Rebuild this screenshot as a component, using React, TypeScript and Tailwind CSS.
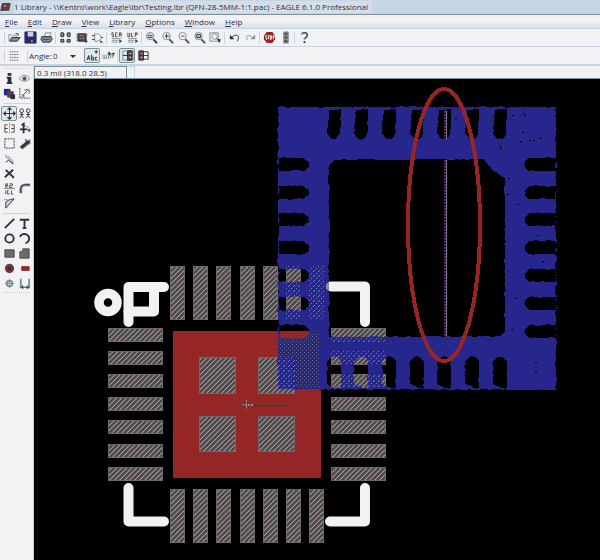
import React from "react";

const INK = "#2c3038";
const MAROON = "#5a4444";
const TEAL = "#7a9296";
const RED = "#962626";
const BLUE = "#26268c";

/* ---------- icons, drawn on a 14 x 14 grid ---------- */

const icons: Record<string, React.ReactNode> = {
  open: (
    <>
      <path d="M1 11V4h3l1 1h4v2" stroke={TEAL} />
      <path d="M2 11l2-4h9l-3 4z" fill={TEAL} stroke={INK} />
      <path d="M8 3h3v2" stroke={INK} />
    </>
  ),
  save: (
    <>
      <path d="M1 1h12v12H1z" fill={BLUE} stroke={INK} />
      <path d="M4 1h6v5H4z" fill="#c6d4e4" />
      <path d="M4 9h6v4H4z" fill={INK} />
      <path d="M8 10h1v2H8z" fill="#f2f2f4" />
    </>
  ),
  print: (
    <>
      <path d="M5 6l1-4h6l-2 4" fill="#f2f2f4" stroke={TEAL} />
      <path d="M2 6h10l1 3-2 3H3L1 9z" fill={TEAL} stroke={INK} />
      <path d="M3 9h7" stroke={MAROON} />
    </>
  ),
  device: (
    <>
      <path d="M2 2h3v4H2zM9 2h3v4H9zM2 9h3v3H2zM9 9h3v3H9z" fill={TEAL} stroke={INK} />
      <path d="M5 4h1M8 4h1M5 11h1M8 11h1" stroke={INK} />
    </>
  ),
  package: (
    <>
      <path d="M3 3h9v8H3z" fill={MAROON} stroke={INK} />
      <path d="M1 4h2M1 7h2M1 10h2M12 4h2M12 7h1" stroke={TEAL} />
      <path d="M5 5h5M5 8h5" stroke={TEAL} />
      <path d="M11 10v3l3-2z" fill={INK} />
    </>
  ),
  symbol: (
    <>
      <path d="M4 3h3q4 1 4 4t-4 4H4z" fill="#f2f2f4" stroke={TEAL} />
      <path d="M1 5h3M1 9h3M11 7h2" stroke={INK} />
      <path d="M10 10v3l3-1z" fill={INK} />
    </>
  ),
  script: (
    <>
      <path d="M4 2H2v2h2v2H2M8 2H6v4h2M10 6V2h2v2h-2M12 4v2" stroke={MAROON} />
      <path d="M2 8h10M2 10h7M2 12h6" stroke={TEAL} />
      <path d="M10 9v4l3-2z" fill={INK} />
    </>
  ),
  ulp: (
    <>
      <path d="M2 2v4h2V2M6 2v4h2M10 6V2h2v2h-2" stroke={MAROON} />
      <path d="M2 8h10M2 10h7M2 12h6" stroke={TEAL} />
      <path d="M10 9v4l3-2z" fill={INK} />
    </>
  ),
  zoomFit: (
    <>
      <circle cx="5.5" cy="5.5" r="4" fill="#c6d4e4" stroke={TEAL} />
      <path d="M3 5h5M3 7h5" stroke={MAROON} />
      <path d="M9 9l4 4" stroke={INK} strokeWidth="2" />
    </>
  ),
  zoomIn: (
    <>
      <circle cx="6" cy="5.5" r="4" fill="#f2f2f4" stroke={TEAL} />
      <path d="M6 3v5M4 5.5h5" stroke={INK} />
      <path d="M9 9l4 4" stroke={MAROON} strokeWidth="2" />
    </>
  ),
  zoomOut: (
    <>
      <circle cx="6" cy="5.5" r="4" fill="#f2f2f4" stroke={TEAL} />
      <path d="M4 5.5h4" stroke={MAROON} />
      <path d="M9 9l4 4" stroke={MAROON} strokeWidth="2" />
    </>
  ),
  zoomRedraw: (
    <>
      <circle cx="6" cy="5.5" r="4" fill="#c6d4e4" stroke={TEAL} />
      <path d="M4 4h4v3H4z" stroke={INK} />
      <path d="M9 9l4 4" stroke={MAROON} strokeWidth="2" />
    </>
  ),
  zoomSelect: (
    <>
      <path d="M1 2h9v9H1z" stroke={TEAL} />
      <circle cx="6" cy="6" r="3" fill="#f2f2f4" stroke={TEAL} />
      <path d="M8 8l2 2" stroke={INK} />
      <path d="M9 9h4l-2 4z" fill={INK} />
    </>
  ),
  undo: (
    <>
      <path d="M4 7q5-5 7-1 1 2-1 5" stroke={INK} />
      <path d="M2 4v5h5z" fill={INK} />
    </>
  ),
  redo: (
    <>
      <path d="M9 7Q4 3 3 6q-1 2 1 4" stroke={TEAL} />
      <path d="M12 4v5H7z" fill={TEAL} />
    </>
  ),
  stop: (
    <>
      <path d="M4 1h6l3 4v4l-3 4H4L1 9V5z" fill={RED} />
      <path d="M4 5H3v2h1v2H3M5 5h2M6 5v4M8 5h1v4H8zM11 9V5h1v2h-1" stroke="#f2f2f4" />
    </>
  ),
  go: (
    <>
      <path d="M5 1h5v12H5z" fill={TEAL} stroke={TEAL} />
      <path d="M6 3h3M6 7h3M6 11h3" stroke={MAROON} strokeWidth="2" />
    </>
  ),
  help: (
    <>
      <path d="M4 4q0-2 3-2t3 2-3 4v1" stroke={TEAL} strokeWidth="2" />
      <path d="M5 2q5-1 5 2t-3 5" stroke={INK} />
      <path d="M6 11h2v2H6z" fill={INK} />
    </>
  ),
  grid: (
    <path d="M2 3h10M2 6h10M2 9h10M2 12h10" stroke={INK} strokeDasharray="1 1" />
  ),
  abc: (
    <>
      <path d="M9 3h4M11 1v4" stroke={INK} />
      <path d="M1 12l2-5 1 5M2 10h2M6 6v6h2V9H6M12 9h-2v3h2" stroke={INK} />
    </>
  ),
  mirror: (
    <>
      <path d="M1 6v4h2V6M3 10h2V6M7 3v8M9 10V6h2v4" stroke={TEAL} />
      <path d="M6 5h4M8 3v4M12 4v4M11 5h3" stroke={INK} />
    </>
  ),
  boardA: (
    <>
      <path d="M2 2h11v10H2z" fill="#dfe7ef" stroke={TEAL} />
      <path d="M7 2h5v10H7zM2 7h10" fill={MAROON} stroke={INK} />
      <path d="M9 5h2M9 9h2" stroke="#f2f2f4" />
    </>
  ),
  boardB: (
    <>
      <path d="M2 2h5v10H2z" fill={MAROON} stroke={INK} />
      <path d="M7 3h5v8H7zM2 7h10" stroke={INK} />
      <path d="M4 5h2M4 9h2" stroke="#c6d4e4" />
    </>
  ),
  info: <path d="M5 1h4v3H5zM4 5h5v6h1v2H4v-2h1V7H4z" fill={INK} />,
  show: (
    <>
      <path d="M1 7q6-7 12 0-6 6-12 0z" fill="#f2f2f4" stroke={TEAL} />
      <circle cx="7" cy="7" r="2" fill={MAROON} stroke={TEAL} />
    </>
  ),
  display: (
    <>
      <path d="M1 2h7v7H1z" fill={BLUE} />
      <path d="M5 5h6v6H5z" fill={MAROON} stroke={RED} />
      <path d="M8 8h5v5H8z" fill={INK} />
    </>
  ),
  mark: (
    <>
      <path d="M2 1v11h11" stroke={INK} strokeDasharray="2 1" />
      <path d="M5 9l5-5M7 3h5v4" stroke={MAROON} />
      <path d="M4 8h3v3H4z" fill={TEAL} />
    </>
  ),
  move: (
    <>
      <path d="M7 2v11M2 7h10" stroke={INK} />
      <path d="M7 0l3 3H4zM7 14l3-3H4zM0 7l3-3v6zM14 7l-3-3v6z" fill={INK} />
    </>
  ),
  copy: (
    <>
      <circle cx="4" cy="4" r="2" stroke={INK} />
      <circle cx="11" cy="4" r="2" stroke={INK} />
      <path d="M4 6v3l-2 3M4 9l2 3M2 8h4M11 6v3l-2 3M11 9l2 3M9 8h4" stroke={INK} />
    </>
  ),
  flip: (
    <>
      <path d="M5 3H2v8h3M9 3h3v8H9" stroke={MAROON} />
      <path d="M7 1v12" stroke={TEAL} strokeDasharray="2 1" />
      <path d="M2 7h3M9 7h3" stroke={INK} />
    </>
  ),
  rotate: (
    <>
      <path d="M6 2v10M2 8h8" stroke={INK} strokeWidth="2" />
      <path d="M6 4q6 0 6 5" stroke={TEAL} />
      <path d="M7 0v5L3 3zM10 8h4l-2 3z" fill={INK} />
    </>
  ),
  group: <path d="M2 2h10v10H2z" stroke={INK} strokeDasharray="2 1" />,
  change: (
    <>
      <path d="M2 11l6-5V2l2 2 3-1v4l-3 2-5 4z" fill={MAROON} stroke={TEAL} />
      <path d="M3 11l5-4 4-2" stroke={INK} strokeWidth="2" />
    </>
  ),
  cut: (
    <>
      <path d="M2 3l8 8" stroke={TEAL} />
      <path d="M3 5l6 6 2 1-1-3-5-5" fill="#c6d4e4" stroke={TEAL} />
      <path d="M3 11l3-2 5 4" stroke={INK} />
    </>
  ),
  erase: <path d="M3 3l8 8M2 11l9-8M10 11h2" stroke={INK} strokeWidth="2" />,
  name: (
    <>
      <path d="M3 6V2h2v2H3l2 2M7 2h3v2H7v2h3M3 9v4M6 9H5v4h2M9 9v4h2" stroke={MAROON} />
      <path d="M1 7h12" stroke={TEAL} />
    </>
  ),
  miter: (
    <>
      <path d="M3 12V8q0-5 5-5h5" stroke={TEAL} strokeWidth="3" />
      <path d="M3 12V8q0-5 5-5h5" stroke={INK} />
    </>
  ),
  split: (
    <>
      <path d="M3 12V6q1-3 9-4L3 12" fill="#c6d4e4" stroke={INK} />
      <path d="M1 3h4" stroke={TEAL} />
    </>
  ),
  wire: <path d="M2 12L12 2" stroke={INK} strokeWidth="2" />,
  text: <path d="M3 4V3h8v1M7 3v9M5 12h4" stroke={INK} strokeWidth="2" />,
  circle: <circle cx="7" cy="7" r="4.5" stroke={INK} strokeWidth="2" />,
  arc: <path d="M2 5q2-3 5-3 5 1 5 5 0 4-4 5" stroke={INK} strokeWidth="2" />,
  rect: <path d="M2 3h10v8H2z" fill="url(#chip)" stroke={MAROON} />,
  polygon: <path d="M2 12V5h3V2h7v10z" fill="url(#chip)" stroke={MAROON} />,
  pad: (
    <>
      <circle cx="7" cy="7" r="4" fill={RED} stroke={MAROON} strokeWidth="2" />
      <circle cx="7" cy="7" r="1.5" fill={INK} />
    </>
  ),
  smd: <path d="M4 5h8v4H4z" fill={RED} stroke={RED} />,
  hole: (
    <>
      <circle cx="7" cy="7" r="3" stroke={TEAL} strokeWidth="2" />
      <path d="M7 2v10M2 7h10" stroke={TEAL} />
    </>
  ),
  dimension: (
    <>
      <path d="M3 2v10M12 2v10" stroke={TEAL} strokeWidth="2" />
      <path d="M3 11h9M5 9v4M10 9v4" stroke={INK} />
    </>
  ),
};

function Tool({ name, label, pressed = false }: { name: string; label: string; pressed?: boolean }) {
  return (
    <button
      type="button"
      aria-label={label}
      aria-pressed={pressed}
      className={
        pressed
          ? "flex h-[15px] w-4 shrink-0 items-center justify-center rounded-xs border border-[#7a9296] bg-[#dfe7ef]"
          : "flex h-[15px] w-4 shrink-0 items-center justify-center"
      }
    >
      <svg viewBox="0 0 14 14" className="size-[13px] shrink-0" fill="none" aria-hidden="true">
        {icons[name]}
      </svg>
    </button>
  );
}

function Divider() {
  return (
    <div className="flex w-[3px] shrink-0 justify-center">
      <div className="h-3 w-px bg-[#c6d4e4]" />
    </div>
  );
}

const mainTools: string[][][] = [
  [["open", "Open"], ["save", "Save"], ["print", "Print"]],
  [["device", "Device"], ["package", "Package"], ["symbol", "Symbol"]],
  [["script", "Run script"], ["ulp", "Run ULP"]],
  [
    ["zoomFit", "Zoom to fit"],
    ["zoomIn", "Zoom in"],
    ["zoomOut", "Zoom out"],
    ["zoomRedraw", "Redraw"],
    ["zoomSelect", "Zoom select"],
  ],
  [["undo", "Undo"], ["redo", "Redo"]],
  [["stop", "Stop"], ["go", "Go"]],
  [["help", "Help"]],
];

const palette: string[][][] = [
  [["info", "Info"], ["show", "Show"], ["display", "Display"], ["mark", "Mark"]],
  [
    ["move", "Move"],
    ["copy", "Copy"],
    ["flip", "Mirror"],
    ["rotate", "Rotate"],
    ["group", "Group"],
    ["change", "Change"],
    ["cut", "Cut"],
    ["", ""],
    ["erase", "Delete"],
    ["", ""],
    ["name", "Name"],
    ["miter", "Miter"],
    ["split", "Split"],
  ],
  [
    ["wire", "Wire"],
    ["text", "Text"],
    ["circle", "Circle"],
    ["arc", "Arc"],
    ["rect", "Rectangle"],
    ["polygon", "Polygon"],
    ["pad", "Pad"],
    ["smd", "Smd"],
    ["hole", "Hole"],
    ["dimension", "Dimension"],
  ],
];

const menus = ["File", "Edit", "Draw", "View", "Library", "Options", "Window", "Help"];

/* ---------- board geometry ---------- */

type Pt = [number, number];

/** Closed outline whose edges wobble a little, like a traced bitmap. */
function rough(points: Pt[], seed: number): string {
  let s = seed * 7919 + 17;
  const noise = () => {
    s = (s * 16807) % 2147483647;
    return Math.round((s / 2147483647 - 0.5) * 2.4);
  };
  const out: string[] = [];
  points.forEach(([x0, y0], i) => {
    const [x1, y1] = points[(i + 1) % points.length];
    const length = Math.hypot(x1 - x0, y1 - y0);
    const steps = Math.max(1, Math.round(length / 3));
    for (let k = 0; k < steps; k++) {
      const x = x0 + ((x1 - x0) * k) / steps;
      const y = y0 + ((y1 - y0) * k) / steps;
      const n = k === 0 ? 0 : noise();
      const flat = Math.abs(y1 - y0) < Math.abs(x1 - x0);
      out.push(`${flat ? x : x + n * 0.6},${flat ? y + n * 0.6 : y}`);
    }
  });
  return `M${out.join("L")}Z`;
}

const rowStarts = [158, 186, 213, 241, 269, 297, 325];
const colStarts = [327, 354, 382, 410, 437, 465, 493];

const copper = [
  rough([[278, 107], [556, 107], [556, 390], [278, 389]], 3),
  rough([[334, 160], [484, 159], [492, 170], [505, 178], [505, 332], [500, 336], [329, 337], [329, 166]], 5),
  ...colStarts.map((x, i) =>
    rough([[x + 2, 110], [x + 14, 109], [x + 13, 134], [x + 9, 139], [x + 4, 139], [x, 133]], i + 11),
  ),
  ...colStarts.map((x, i) =>
    rough([[x + 4, 357], [x + 10, 357], [x + 14, 361], [x + 14, 388], [x + 9, 388], [x, 384], [x, 361]], i + 31),
  ),
  ...rowStarts.map((y, i) =>
    rough([[279, y], [304, y], [309, y + 4], [309, y + 9], [304, y + 13], [279, y + 13]], i + 51),
  ),
  ...rowStarts.map((y, i) =>
    rough([[556, y], [529, y], [525, y + 4], [525, y + 9], [529, y + 13], [556, y + 13]], i + 71),
  ),
].join("");

const padCols = [170, 193, 216, 240, 263, 286, 309];
const padRows = [328, 351, 374, 397, 420, 444, 467];

const pads = [
  ...padCols.map((x) => ({ x, y: 266, w: 15, h: 54 })),
  ...padCols.map((x) => ({ x, y: 489, w: 15, h: 54 })),
  ...padRows.map((y) => ({ x: 108, y, w: 55, h: 14 })),
  ...padRows.map((y) => ({ x: 331, y, w: 55, h: 14 })),
  { x: 199, y: 357, w: 37, h: 37 },
  { x: 258, y: 357, w: 37, h: 37 },
  { x: 199, y: 416, w: 37, h: 36 },
  { x: 258, y: 416, w: 37, h: 36 },
];

const specks: Pt[] = [
  [523, 113], [524, 115], [512, 115], [540, 138], [522, 132], [520, 141], [499, 146],
  [500, 148], [517, 204], [537, 235], [542, 261], [515, 298], [535, 362], [535, 371],
  [508, 178], [455, 118], [507, 194], [533, 140], [529, 140], [511, 329],
];

function Board() {
  return (
    <svg
      viewBox="34 79 566 481"
      preserveAspectRatio="xMinYMin meet"
      className="block h-full w-full"
      role="img"
      aria-label="QFN-28 package with imported outline"
      shapeRendering="crispEdges"
    >
      <defs>
        <pattern id="hatch" width="5" height="5" patternUnits="userSpaceOnUse">
          <path d="M0 0h5v5H0z" fill={MAROON} />
          <path d="M4 0h1v1H4zM3 1h1v1H3zM2 2h1v1H2zM1 3h1v1H1zM0 4h1v1H0z" fill="#84a0a2" />
          <path d="M3 0h1v1H3zM2 1h1v1H2zM1 2h1v1H1zM0 3h1v1H0zM4 4h1v1H4z" fill="#6b7078" />
        </pattern>
        <pattern id="faint" width="5" height="5" patternUnits="userSpaceOnUse">
          <path d="M4 0h1v1H4zM3 1h1v1H3zM1 3h1v1H1z" fill="#7088a0" />
        </pattern>
        <pattern id="dots" width="4" height="4" patternUnits="userSpaceOnUse">
          <path d="M0 0h1v1H0zM2 2h1v1H2z" fill="#66647c" />
        </pattern>
        <pattern id="grain" width="11" height="13" patternUnits="userSpaceOnUse">
          <path d="M2 1h1v1H2zM8 5h1v1H8zM4 10h1v1H4z" fill="#6e3436" />
        </pattern>
        <clipPath id="copperClip">
          <path d={copper} clipRule="evenodd" />
        </clipPath>
      </defs>

      <rect x="173" y="331" width="148" height="147" fill={RED} />
      <rect x="173" y="331" width="148" height="147" fill="url(#grain)" />
      {pads.map((p, i) => (
        <g key={i}>
          <rect x={p.x} y={p.y} width={p.w} height={p.h} fill="#6b686e" />
          <rect x={p.x + 1} y={p.y + 1} width={p.w - 2} height={p.h - 2} fill="url(#hatch)" />
        </g>
      ))}

      <path d={copper} fill={BLUE} fillRule="evenodd" />
      <g clipPath="url(#copperClip)">
        <rect x="295" y="334" width="24" height="54" fill="url(#dots)" />
        <rect x="278" y="337" width="17" height="20" fill="url(#dots)" />
        {pads.map((p, i) => (
          <rect key={i} x={p.x} y={p.y} width={p.w} height={p.h} fill="url(#faint)" />
        ))}
      </g>
      {specks.map(([x, y], i) => (
        <rect key={i} x={x} y={y} width="2" height="1" fill="#000" />
      ))}

      <g fill="none" stroke="#f2f2f4" strokeWidth="10" strokeLinecap="round" strokeLinejoin="round" shapeRendering="auto">
        <path d="M128.5 322V287H164" />
        <path d="M128.5 311.5H154V287" />
        <circle cx="108" cy="302.5" r="9" strokeWidth="9.5" />
        <path d="M331 286.5H365V322" />
        <path d="M128.5 488V521.5H164" />
        <path d="M330 521.5H365V488" />
      </g>
      <path d="M329 282v9l-3-2v-5z" fill={TEAL} />

      <path d="M445 111v28M445 160v176" stroke={RED} strokeWidth="2" strokeDasharray="2 1" />
      <path d="M445 112v27M445 161v175" stroke={BLUE} strokeWidth="2" strokeDasharray="1 2" />
      <path d="M446.5 111v28M446.5 160v176" stroke="#77779a" strokeWidth="1" />
      <ellipse cx="444" cy="225" rx="36" ry="136" fill="none" stroke={RED} strokeWidth="4" />

      <g strokeDasharray="2 1">
        <path d="M253 404.5h35" stroke={MAROON} />
        <path d="M254 405.5h33" stroke={INK} />
        <path d="M242 404.5h11M246.5 400v10" stroke={TEAL} />
        <path d="M245 405.5h8" stroke={TEAL} />
      </g>
    </svg>
  );
}

/* ---------- window ---------- */

export default function App() {
  return (
    <div className="flex h-screen flex-col overflow-hidden bg-[#f2f2f4] font-['Open_Sans','Noto_Sans',sans-serif] text-[8px] leading-3 text-[#2c3038]">
      <header className="flex h-[15px] shrink-0 items-center gap-[3px] border-b border-[#7a9296] bg-[#c6d4e4]">
        <svg viewBox="0 0 14 14" className="size-[11px] shrink-0" fill="none" aria-hidden="true">
          <path d="M3 2h10l-2 9H1z" fill={MAROON} stroke={INK} />
          <path d="M4 8l3-4 4 1-2 4z" fill={RED} />
          <path d="M2 12h9M5 5h3" stroke="#f2f2f4" />
        </svg>
        <h1 className="bg-[#d4deea] pr-1 whitespace-nowrap">
          {"1 Library - \\\\Kentro\\work\\Eagle\\lbr\\Testing.lbr (QFN-28-5MM-1:1.pac) - EAGLE 6.1.0 Professional"}
        </h1>
      </header>

      <nav className="flex h-[14px] shrink-0 items-center gap-[10px] border-b border-[#c6d4e4] bg-linear-to-b from-[#f2f2f4] from-40% to-[#d8e1eb] pl-[5px]">
        {menus.map((m) => (
          <button key={m} type="button">
            <span className="underline">{m[0]}</span>
            {m.slice(1)}
          </button>
        ))}
      </nav>

      <div role="toolbar" aria-label="Actions" className="flex h-[18px] shrink-0 items-center border-b border-[#c6d4e4] pl-[3px]">
        {mainTools.map((group, i) => (
          <div key={i} className="flex items-center">
            <Divider />
            {group.map(([name, label]) => (
              <Tool key={name} name={name} label={label} />
            ))}
          </div>
        ))}
      </div>

      <div role="toolbar" aria-label="Parameters" className="flex h-[19px] shrink-0 items-center border-b-2 border-[#c6d4e4] pl-[3px]">
        <Divider />
        <Tool name="grid" label="Grid" />
        <div className="w-1" />
        <Divider />
        <label htmlFor="angle" className="w-6">
          Angle:
        </label>
        <div className="relative mr-1 w-[27px]">
          <select id="angle" defaultValue="0" className="block w-full appearance-none bg-transparent">
            <option>0</option>
            <option>90</option>
            <option>180</option>
            <option>270</option>
          </select>
          <svg viewBox="0 0 6 3" className="pointer-events-none absolute top-[5px] right-1 h-[3px] w-[6px]" aria-hidden="true">
            <path d="M0 0h6L3 3z" fill={INK} />
          </svg>
        </div>
        <Tool name="abc" label="Spin" pressed />
        <Tool name="mirror" label="Mirror text" />
        <Divider />
        <Tool name="boardA" label="Top side" pressed />
        <Tool name="boardB" label="Bottom side" />
      </div>

      <div className="flex min-h-0 flex-1">
        <aside className="w-[34px] shrink-0 border-r border-[#c6d4e4] px-px" aria-label="Commands">
          <svg className="absolute size-0" aria-hidden="true">
            <pattern id="chip" width="2" height="2" patternUnits="userSpaceOnUse">
              <path d="M0 0h2v2H0z" fill={TEAL} />
              <path d="M0 0h1v1H0zM1 1h1v1H1z" fill={MAROON} />
            </pattern>
          </svg>
          {palette.map((group, i) => (
            <div key={i}>
              <div className="flex h-[5px] items-center px-0.5">
                <div className={i ? "w-full border-t border-[#c6d4e4]" : "w-full border-t border-dotted border-[#c6d4e4]"} />
              </div>
              <div className="grid grid-cols-2">
                {group.map(([name, label], k) =>
                  name ? <Tool key={k} name={name} label={label} pressed={name === "move"} /> : <span key={k} />,
                )}
              </div>
            </div>
          ))}
          <div className="mx-0.5 mt-px border-t border-dotted border-[#c6d4e4]" />
        </aside>

        <main className="flex min-w-0 flex-1 flex-col">
          <div className="flex h-[13px] shrink-0 border-b border-[#7a9296]">
            <output className="w-[93px] border-t border-r border-l border-[#7a9296] pl-0.5 leading-[11px]">
              0.3 mil (318.0 28.5)
            </output>
            <div className="w-2 border-t border-r border-[#c6d4e4]" />
          </div>
          <div className="min-h-0 flex-1 bg-black">
            <Board />
          </div>
        </main>
      </div>
    </div>
  );
}
